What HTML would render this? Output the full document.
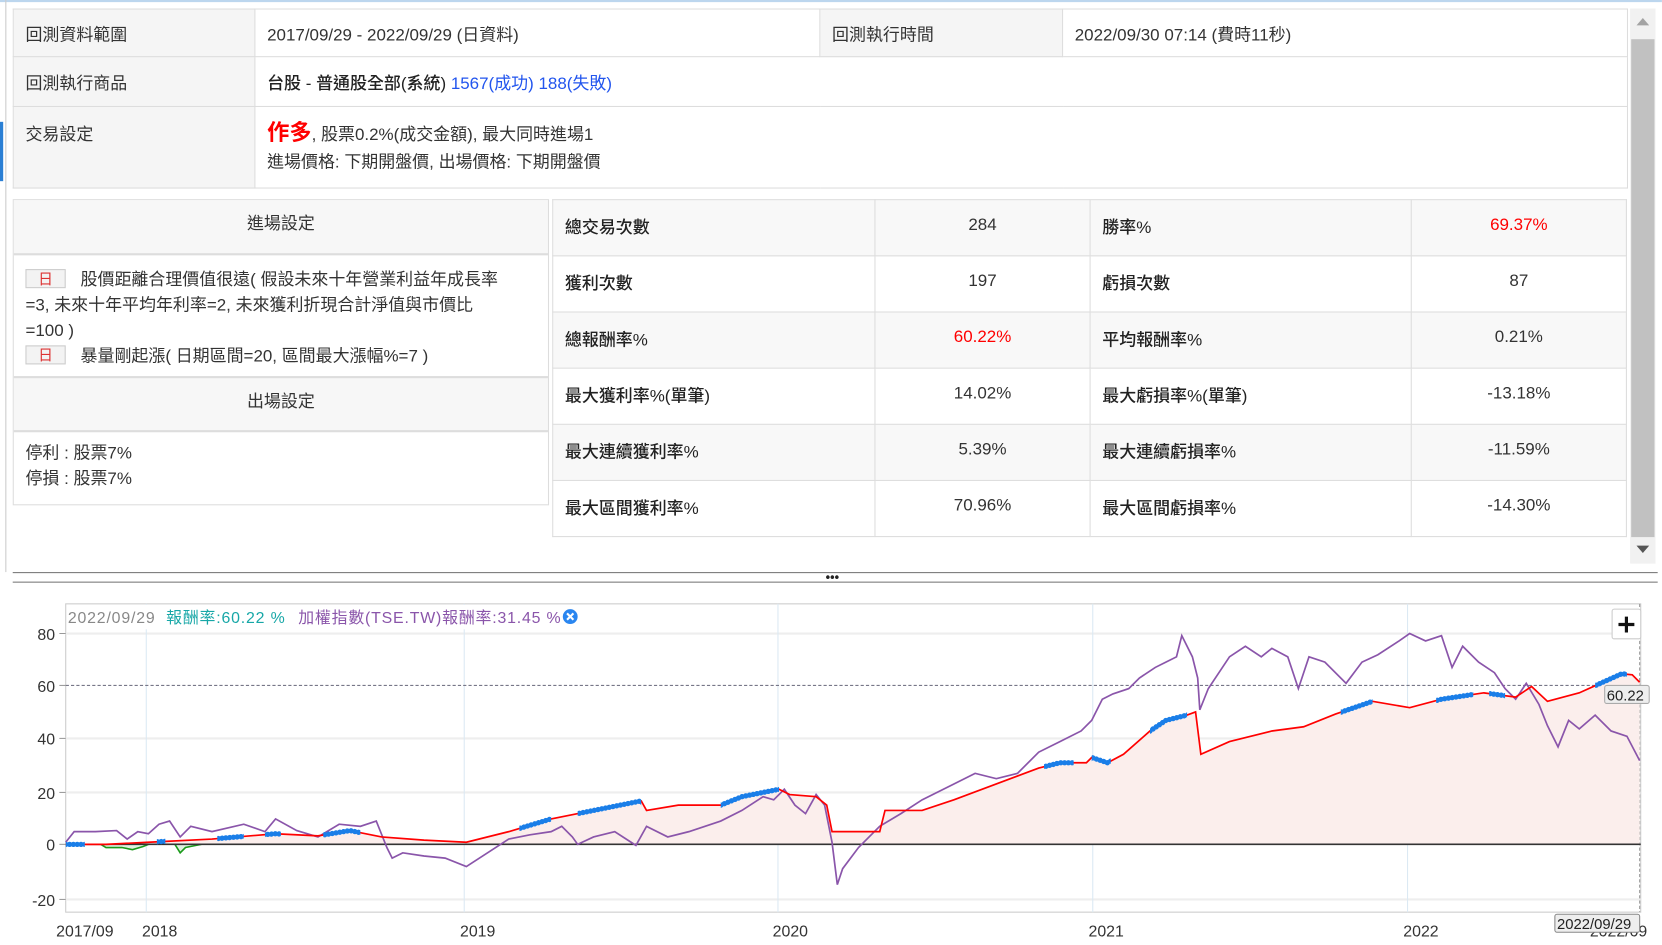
<!DOCTYPE html>
<html><head><meta charset="utf-8"><style>
*{margin:0;padding:0;box-sizing:border-box}
html,body{width:1662px;height:945px;overflow:hidden;background:#fff}
#w{position:absolute;left:0;top:0;width:1568px;height:892px;transform:scale(1.0599,1.0594);transform-origin:0 0;font-family:"Liberation Sans","Noto Sans CJK TC",sans-serif;font-size:16px;color:#333}
.a{position:absolute}
table{border-collapse:collapse;position:absolute}
td{border:1px solid #ddd;padding:0 11px}
.g{background:#f5f5f5}
.s td{height:53px;vertical-align:top;padding-top:12px;font-size:16px}
.s tr:nth-child(odd){background:#f8f8f8}
.s td.v{text-align:center;padding-top:15px}
.s td.l{font-weight:500;color:#222}
.r{color:#f00}
.tag{display:inline-block;width:38px;height:18px;border:1px solid #ccc;background:#f3f3f3;color:#d33;font-size:14px;text-align:center;line-height:16px;margin-right:14px;vertical-align:1px}
</style></head><body><div id="w">
<div class="a" style="left:0;top:0;width:1568px;height:2px;background:#bcd6ee"></div>
<div class="a" style="left:0;top:115px;width:3px;height:56px;background:#2a7fd4"></div>
<div class="a" style="left:5px;top:0;width:1px;height:540px;background:#ccc"></div>
<table style="left:12px;top:8px;width:1524px">
<tr style="height:45px"><td class="g" style="width:228px">回測資料範圍</td><td style="width:533px">2017/09/29 - 2022/09/29 (日資料)</td><td class="g" style="width:229px">回測執行時間</td><td>2022/09/30 07:14 (費時11秒)</td></tr>
<tr style="height:47px"><td class="g">回測執行商品</td><td colspan="3"><span style="font-weight:500;color:#222">台股 - 普通股全部(系統)</span> <span style="color:#2255ee">1567(成功) 188(失敗)</span></td></tr>
<tr style="height:77px"><td class="g" style="vertical-align:top;padding-top:12px">交易設定</td><td colspan="3" style="line-height:26px;padding-top:12px;vertical-align:top"><span class="r" style="font-size:21px;font-weight:bold">作多</span>, 股票0.2%(成交金額), 最大同時進場1<br>進場價格: 下期開盤價, 出場價格: 下期開盤價</td></tr>
</table>
<div class="a" style="left:1538px;top:8px;width:24px;height:524px;background:#f1f1f1"></div>
<div class="a" style="left:1539px;top:37px;width:22px;height:470px;background:#c1c1c1"></div>
<div class="a" style="left:1544px;top:17px;width:0;height:0;border-left:6px solid transparent;border-right:6px solid transparent;border-bottom:7px solid #a3a3a3"></div>
<div class="a" style="left:1544px;top:515px;width:0;height:0;border-left:6px solid transparent;border-right:6px solid transparent;border-top:7px solid #555"></div>

<div class="a" style="left:12px;top:188px;width:506px;height:289px;border:1px solid #ddd">
<div style="height:52px;background:#f7f7f7;border-bottom:2px solid #ddd;text-align:center;line-height:46px">進場設定</div>
<div style="height:114px;padding:12px 11px 0;line-height:24px;font-size:16px;white-space:nowrap"><span class="tag">日</span>股價距離合理價值很遠( 假設未來十年營業利益年成長率<br>=3, 未來十年平均年利率=2, 未來獲利折現合計淨值與市價比<br>=100 )<br><span class="tag">日</span>暴量剛起漲( 日期區間=20, 區間最大漲幅%=7 )</div>
<div style="height:53px;background:#f7f7f7;border-top:2px solid #ddd;border-bottom:2px solid #ddd;text-align:center;line-height:46px">出場設定</div>
<div style="padding:9px 11px;line-height:24px">停利 : 股票7%<br>停損 : 股票7%</div>
</div>

<table class="s" style="left:521px;top:188px;width:1014px">
<tr><td class="l" style="width:304px">總交易次數</td><td class="v" style="width:203px">284</td><td class="l" style="width:303px">勝率%</td><td class="v r">69.37%</td></tr>
<tr><td class="l">獲利次數</td><td class="v">197</td><td class="l">虧損次數</td><td class="v">87</td></tr>
<tr><td class="l">總報酬率%</td><td class="v r">60.22%</td><td class="l">平均報酬率%</td><td class="v">0.21%</td></tr>
<tr><td class="l">最大獲利率%(單筆)</td><td class="v">14.02%</td><td class="l">最大虧損率%(單筆)</td><td class="v">-13.18%</td></tr>
<tr><td class="l">最大連續獲利率%</td><td class="v">5.39%</td><td class="l">最大連續虧損率%</td><td class="v">-11.59%</td></tr>
<tr><td class="l">最大區間獲利率%</td><td class="v">70.96%</td><td class="l">最大區間虧損率%</td><td class="v">-14.30%</td></tr>
</table>

<div class="a" style="left:12px;top:540px;width:1552px;height:1px;background:#777"></div>
<div class="a" style="left:12px;top:549px;width:1552px;height:1px;background:#777"></div>
<div class="a" style="left:779px;top:541px;font-size:12px;line-height:8px;font-weight:bold;color:#222">•••</div>

<svg class="a" style="left:0;top:555px" width="1568" height="337" viewBox="0 555 1568 337">
<defs><clipPath id="bl"><rect x="62" y="555" width="18" height="300"/><rect x="148" y="555" width="8" height="300"/><rect x="205" y="555" width="25" height="300"/><rect x="250" y="555" width="15" height="300"/><rect x="305" y="555" width="35" height="300"/><rect x="490" y="555" width="30" height="300"/><rect x="545" y="555" width="60" height="300"/><rect x="680" y="555" width="55" height="300"/><rect x="985" y="555" width="28" height="300"/><rect x="1030" y="555" width="18" height="300"/><rect x="1085" y="555" width="35" height="300"/><rect x="1265" y="555" width="30" height="300"/><rect x="1355" y="555" width="35" height="300"/><rect x="1405" y="555" width="15" height="300"/><rect x="1505" y="555" width="30" height="300"/></clipPath></defs>
<rect x="62" y="570" width="1486" height="291" fill="#fff" stroke="#ccc"/>
<g stroke="#eee" stroke-width="2"><line x1="62" y1="598" x2="1548" y2="598"/><line x1="62" y1="697" x2="1548" y2="697"/><line x1="62" y1="748" x2="1548" y2="748"/><line x1="62" y1="849" x2="1548" y2="849"/></g>
<g stroke="#dbe9f3"><line x1="138" y1="570" x2="138" y2="861"/><line x1="438" y1="570" x2="438" y2="861"/><line x1="734" y1="570" x2="734" y2="861"/><line x1="1031" y1="570" x2="1031" y2="861"/><line x1="1328" y1="570" x2="1328" y2="861"/></g>
<line x1="62" y1="647" x2="1548" y2="647" stroke="#778" stroke-dasharray="3 2"/>
<line x1="1547" y1="570" x2="1547" y2="861" stroke="#999" stroke-dasharray="3 2"/>
<polygon fill="#fbeeec" points="62,797 100,797 140,795 200,792 260,787 300,789 330,784 360,790 400,793 440,795 480,785 520,773 560,765 605,756 610,765 640,760 680,760 700,752 735,745 745,750 770,752 780,760 785,785 830,785 835,765 870,765 900,755 940,740 980,725 1000,720 1025,720 1030,715 1045,720 1060,712 1085,690 1100,680 1120,675 1128,672 1133,712 1160,700 1200,690 1230,686 1260,674 1295,662 1330,668 1360,660 1400,654 1430,658 1445,648 1460,662 1490,654 1510,645 1530,636 1540,637 1547,644 1547,797"/>
<polyline fill="#e0f0e0" stroke="#1a9a1a" stroke-width="1.5" points="95,797 100,800 115,800 125,802 135,799 140,797"/>
<polyline fill="#e0f0e0" stroke="#1a9a1a" stroke-width="1.5" points="165,797 170,805 175,800 185,798 190,797"/>
<line x1="62" y1="797" x2="1548" y2="797" stroke="#333" stroke-width="1.5"/>
<polyline fill="none" stroke="#8a55aa" stroke-width="1.6" points="62,795 70,785 90,785 110,784 120,792 130,785 140,787 150,778 160,775 170,790 180,780 200,785 230,778 250,785 260,773 280,784 300,790 320,778 340,780 355,775 365,800 370,810 380,805 400,808 420,810 440,818 460,805 480,792 500,788 520,785 530,780 540,790 545,797 560,790 580,785 600,798 610,780 630,790 650,785 680,775 700,765 720,752 730,755 740,745 750,760 760,768 770,750 778,760 785,795 790,835 795,820 810,800 830,780 850,768 870,755 900,740 920,730 940,735 960,730 980,710 1000,700 1020,690 1030,680 1040,660 1050,655 1065,650 1075,640 1090,630 1100,625 1110,620 1115,600 1125,620 1130,640 1132,670 1140,650 1160,620 1175,610 1190,620 1200,612 1215,620 1225,650 1235,620 1250,625 1270,645 1285,625 1300,618 1320,605 1330,598 1345,605 1360,600 1370,630 1380,610 1395,625 1410,635 1420,650 1430,660 1440,645 1452,665 1460,685 1470,705 1480,680 1490,688 1505,675 1520,690 1535,695 1547,718"/>
<polyline fill="none" stroke="#f00" stroke-width="1.6" points="62,797 100,797 140,795 200,792 260,787 300,789 330,784 360,790 400,793 440,795 480,785 520,773 560,765 605,756 610,765 640,760 680,760 700,752 735,745 745,750 770,752 780,760 785,785 830,785 835,765 870,765 900,755 940,740 980,725 1000,720 1025,720 1030,715 1045,720 1060,712 1085,690 1100,680 1120,675 1128,672 1133,712 1160,700 1200,690 1230,686 1260,674 1295,662 1330,668 1360,660 1400,654 1430,658 1445,648 1460,662 1490,654 1510,645 1530,636 1540,637 1547,644"/>
<g clip-path="url(#bl)"><polyline fill="none" stroke="#1a7ee8" stroke-width="5" stroke-linecap="round" stroke-dasharray="0.1 3.5" points="62,797 100,797 140,795 200,792 260,787 300,789 330,784 360,790 400,793 440,795 480,785 520,773 560,765 605,756 610,765 640,760 680,760 700,752 735,745 745,750 770,752 780,760 785,785 830,785 835,765 870,765 900,755 940,740 980,725 1000,720 1025,720 1030,715 1045,720 1060,712 1085,690 1100,680 1120,675 1128,672 1133,712 1160,700 1200,690 1230,686 1260,674 1295,662 1330,668 1360,660 1400,654 1430,658 1445,648 1460,662 1490,654 1510,645 1530,636 1540,637 1547,644"/></g>
<g font-family="Liberation Sans,sans-serif" font-size="15" fill="#333" text-anchor="end"><text x="52" y="604">80</text><text x="52" y="653">60</text><text x="52" y="703">40</text><text x="52" y="754">20</text><text x="52" y="803">0</text><text x="52" y="855">-20</text></g>
<g stroke="#999"><line x1="56" y1="598" x2="62" y2="598"/><line x1="56" y1="647" x2="62" y2="647"/><line x1="56" y1="697" x2="62" y2="697"/><line x1="56" y1="748" x2="62" y2="748"/><line x1="56" y1="797" x2="62" y2="797"/><line x1="56" y1="849" x2="62" y2="849"/></g>
<g font-family="Liberation Sans,sans-serif" font-size="15" fill="#333"><text x="53" y="884">2017/09</text><text x="134" y="884">2018</text><text x="434" y="884">2019</text><text x="729" y="884">2020</text><text x="1027" y="884">2021</text><text x="1324" y="884">2022</text><text x="1500" y="884">2022/09</text></g>
<rect x="1467" y="863" width="80" height="17" rx="2" fill="#eee" stroke="#888"/>
<text x="1469" y="877" font-family="Liberation Sans,sans-serif" font-size="14" fill="#222">2022/09/29</text>
<rect x="1514" y="647" width="42" height="17" rx="2" fill="#eee" stroke="#aaa"/>
<text x="1516" y="661" font-family="Liberation Sans,sans-serif" font-size="14" fill="#222">60.22</text>
<rect x="1521" y="575" width="27" height="28" rx="2" fill="#fff" stroke="#ccc"/>
<path d="M1534.5 582v15M1527 589.5h15" stroke="#111" stroke-width="3"/>
<rect x="63" y="571" width="485" height="23" fill="#fff"/>
<text x="64" y="588" font-family="Liberation Sans,'Noto Sans CJK TC',sans-serif" font-size="15" textLength="465"><tspan fill="#888">2022/09/29</tspan><tspan fill="#17a7a7" dx="10">報酬率:60.22 %</tspan><tspan fill="#8a55aa" dx="12">加權指數(TSE.TW)報酬率:31.45 %</tspan></text>
<circle cx="538" cy="582" r="7" fill="#2a86f0"/><path d="M535 579l6 6M541 579l-6 6" stroke="#fff" stroke-width="2"/>
</svg>
</div></body></html>
